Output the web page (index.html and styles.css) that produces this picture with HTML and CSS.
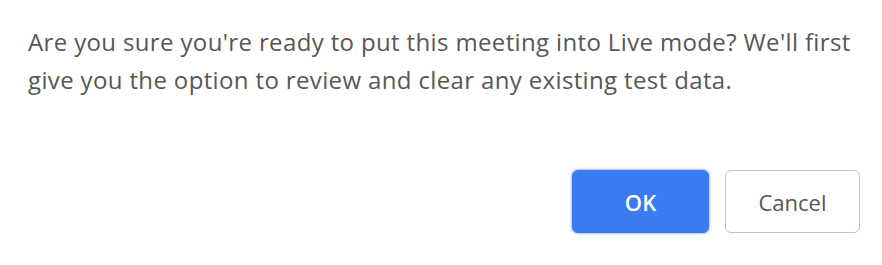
FILE: index.html
```html
<!DOCTYPE html>
<html>
<head>
<meta charset="utf-8">
<link rel="stylesheet" href="styles.css">
</head>
<body>
<div class="dialog">
  <p class="message">Are you sure you're ready to put this meeting into Live mode? We'll first give you the option to review and clear any existing test data.</p>
  <div class="actions">
    <button class="btn btn-primary">OK</button>
    <button class="btn btn-secondary">Cancel</button>
  </div>
</div>
</body>
</html>
```
FILE: styles.css
```css
html, body {
  margin: 0;
  padding: 0;
  background: #fff;
}
.dialog {
  width: 882px;
  height: 265px;
  box-sizing: border-box;
  padding: 23px 22px 0 28px;
  font-family: "Open Sans", "Noto Sans", sans-serif;
  color: #575757;
}
.message {
  margin: 0;
  font-size: 24px;
  line-height: 38px;
  letter-spacing: 0.36px;
  width: 840px;
}
.actions {
  display: flex;
  justify-content: flex-end;
  gap: 16px;
  margin-top: 71px;
}
.btn {
  font-family: "Open Sans", "Noto Sans", sans-serif;
  font-size: 22px;
  border-radius: 6px;
  box-sizing: border-box;
  height: 63px;
  cursor: pointer;
}
.btn-primary {
  width: 137px;
  font-weight: 600;
  background: #3b7bf1;
  color: #fff;
  border: 1px solid #3b7bf1;
  box-shadow: 0 0 0 1px #b9d2fb, 0 0 3px 1px #c9dcfc;
}
.btn-secondary {
  width: 135px;
  font-weight: 500;
  background: #fff;
  color: #575757;
  border: 1px solid #c4c4c4;
}
```
